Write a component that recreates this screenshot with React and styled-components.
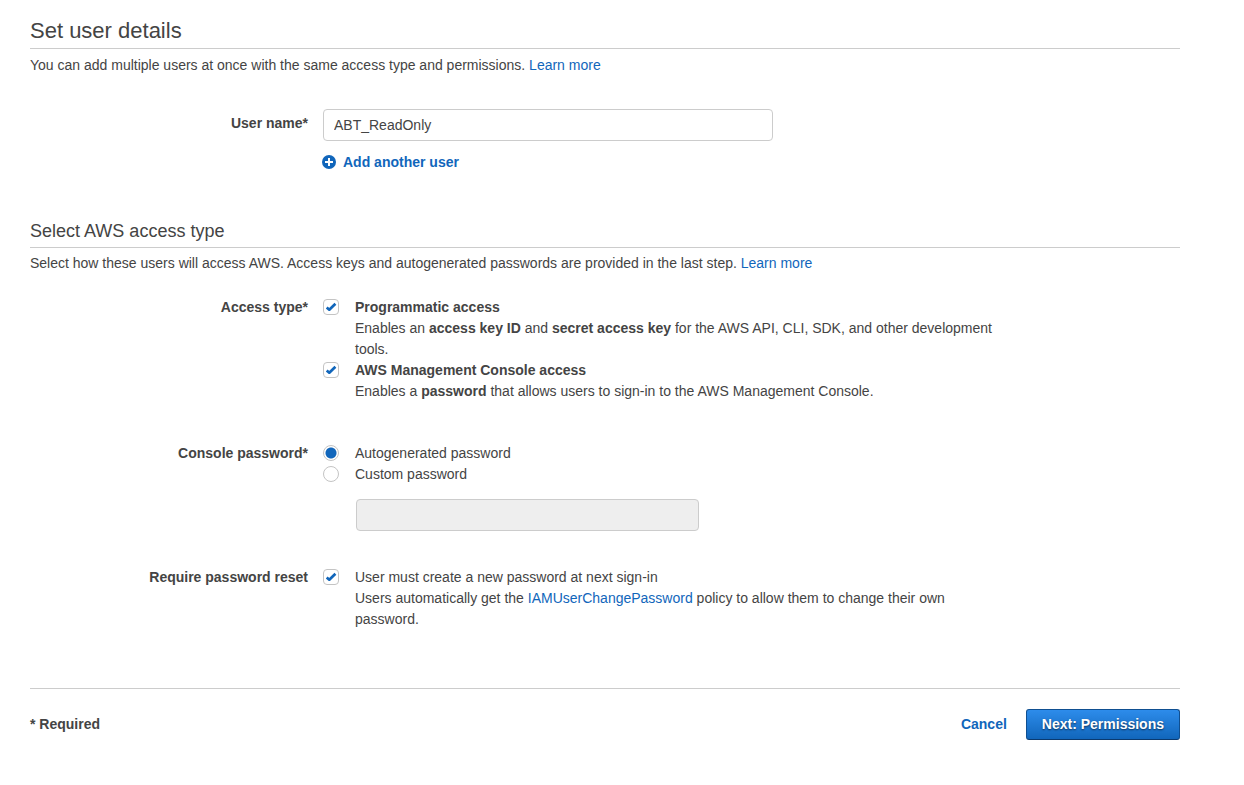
import React, { useState } from 'react';
import styled, { createGlobalStyle } from 'styled-components';

const GlobalStyle = createGlobalStyle`
  *, *::before, *::after { box-sizing: border-box; }
  body {
    margin: 0;
    background: #fff;
    color: #444;
    font: 14px/21px "Liberation Sans", Arial, Helvetica, sans-serif;
  }
`;

const Page = styled.main`
  padding: 16px 64px 40px 30px;
`;

const Title = styled.h1`
  margin: 0 0 6px;
  padding-bottom: 3px;
  border-bottom: 1px solid #ccc;
  font-size: 22px;
  line-height: 29px;
  font-weight: 400;
`;

const Subtitle = styled.h2`
  margin: 0 0 5px;
  padding-bottom: 4px;
  border-bottom: 1px solid #ccc;
  font-size: 18px;
  line-height: 24px;
  font-weight: 400;
`;

const Intro = styled.p`
  margin: 0;
`;

const Link = styled.a`
  color: #1166bb;
  text-decoration: none;
  font-weight: ${(p) => (p.$strong ? 700 : 400)};
  &:hover { text-decoration: underline; }
`;

const Section = styled.section`
  margin-bottom: 46px;
`;

const Field = styled.div`
  display: grid;
  grid-template-columns: 278px minmax(0, 686px);
  column-gap: 15px;
  margin-top: ${(p) => p.$gap}px;
`;

const Label = styled.div`
  text-align: right;
  font-weight: 700;
  padding-top: ${(p) => (p.$input ? 4 : 0)}px;
`;

const TextInput = styled.input`
  display: block;
  width: 100%;
  max-width: ${(p) => p.$max}px;
  height: 32px;
  padding: 0 10px;
  border: 1px solid #ccc;
  border-radius: 4px;
  background: #fff;
  color: #444;
  font: inherit;
  &:disabled { background: #eee; }
`;

const AddButton = styled.button`
  display: flex;
  align-items: center;
  gap: 7px;
  margin: 11px 0 0 -1px;
  padding: 0;
  border: 0;
  background: none;
  color: #1166bb;
  font: inherit;
  font-weight: 700;
  cursor: pointer;
  svg { margin-bottom: 2px; }
`;

const Option = styled.label`
  display: grid;
  grid-template-columns: 16px 1fr;
  column-gap: 16px;
`;

const Toggle = styled.input`
  appearance: none;
  width: 16px;
  height: 16px;
  margin: 2px 0 0;
  border: 1px solid #c4c4c4;
  border-radius: ${(p) => (p.type === 'radio' ? '50%' : '4px')};
  background: #fff center / 14px 14px no-repeat;
  &[type='checkbox']:checked {
    background-image: url("data:image/svg+xml,%3Csvg xmlns='http://www.w3.org/2000/svg' viewBox='0 0 14 14'%3E%3Cpath d='M2.7 7.4 5.3 9.7 11.4 3.8' fill='none' stroke='%231166bb' stroke-width='2.7' stroke-linejoin='round'/%3E%3C/svg%3E");
  }
  &[type='radio']:checked {
    background-image: radial-gradient(circle, #1166bb 5px, transparent 6px);
  }
`;

const Custom = styled.div`
  margin: 14px 0 0 33px;
`;

const Footer = styled.footer`
  display: flex;
  align-items: center;
  justify-content: space-between;
  margin-top: 58px;
  padding-top: 20px;
  border-top: 1px solid #ccc;
`;

const Actions = styled.div`
  display: flex;
  align-items: center;
  gap: 19px;
`;

const PrimaryButton = styled.button`
  height: 31px;
  padding: 0 15px;
  border: 1px solid #0f4f91;
  border-bottom-color: #0a3a70;
  border-radius: 3px;
  background: linear-gradient(#2d8ceb, #1166bb);
  color: #fff;
  font: inherit;
  font-weight: 700;
  text-shadow: 0 1px 2px rgba(0, 0, 0, 0.6);
  cursor: pointer;
`;

function PlusIcon() {
  return (
    <svg width="14" height="14" viewBox="0 0 14 14" aria-hidden="true">
      <circle cx="7" cy="7" r="7" fill="#1166bb" />
      <path d="M7 3v8M3 7h8" stroke="#fff" strokeWidth="2" />
    </svg>
  );
}

export default function App() {
  const [mode, setMode] = useState('auto');
  return (
    <>
      <GlobalStyle />
      <Page>
        <Section>
          <Title>Set user details</Title>
          <Intro>
            You can add multiple users at once with the same access type and permissions. <Link href="#users">Learn more</Link>
          </Intro>
          <Field $gap={33}>
            <Label as="label" htmlFor="username" $input>User name*</Label>
            <div>
              <TextInput id="username" type="text" defaultValue="ABT_ReadOnly" $max={450} />
              <AddButton type="button"><PlusIcon />Add another user</AddButton>
            </div>
          </Field>
        </Section>

        <Subtitle>Select AWS access type</Subtitle>
        <Intro>
          Select how these users will access AWS. Access keys and autogenerated passwords are provided in the last step. <Link href="#access">Learn more</Link>
        </Intro>
        <Field $gap={23} role="group" aria-labelledby="access-label">
          <Label id="access-label">Access type*</Label>
          <div>
            <Option>
              <Toggle type="checkbox" defaultChecked />
              <span>
                <b>Programmatic access</b><br />
                Enables an <b>access key ID</b> and <b>secret access key</b> for the AWS API, CLI, SDK, and other development tools.
              </span>
            </Option>
            <Option>
              <Toggle type="checkbox" defaultChecked />
              <span>
                <b>AWS Management Console access</b><br />
                Enables a <b>password</b> that allows users to sign-in to the AWS Management Console.
              </span>
            </Option>
          </div>
        </Field>
        <Field $gap={41} role="radiogroup" aria-labelledby="password-label">
          <Label id="password-label">Console password*</Label>
          <div>
            <Option>
              <Toggle type="radio" name="password" checked={mode === 'auto'} onChange={() => setMode('auto')} />
              <span>Autogenerated password</span>
            </Option>
            <Option>
              <Toggle type="radio" name="password" checked={mode === 'custom'} onChange={() => setMode('custom')} />
              <span>Custom password</span>
            </Option>
            <Custom>
              <TextInput type="password" aria-label="Custom password" disabled={mode === 'auto'} $max={343} />
            </Custom>
          </div>
        </Field>
        <Field $gap={36} role="group" aria-labelledby="reset-label">
          <Label id="reset-label">Require password reset</Label>
          <Option>
            <Toggle type="checkbox" defaultChecked />
            <span>
              User must create a new password at next sign-in<br />
              Users automatically get the <Link href="#policy">IAMUserChangePassword</Link> policy to allow them to change their own password.
            </span>
          </Option>
        </Field>

        <Footer>
          <b>* Required</b>
          <Actions>
            <Link href="#cancel" $strong>Cancel</Link>
            <PrimaryButton type="button">Next: Permissions</PrimaryButton>
          </Actions>
        </Footer>
      </Page>
    </>
  );
}
